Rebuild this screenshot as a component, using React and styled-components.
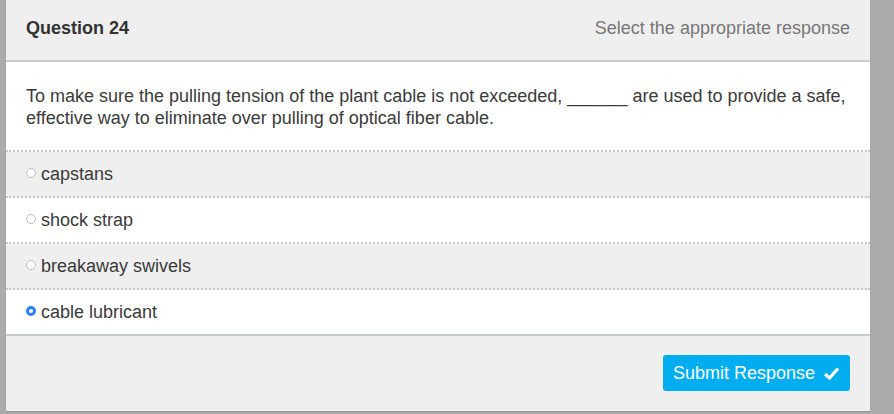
import React from "react";
import styled, { createGlobalStyle } from "styled-components";

const Global = createGlobalStyle`
  html, body { margin: 0; padding: 0; background: #ababab; }
  body { font-family: "Liberation Sans", Arial, sans-serif; }
  * { box-sizing: border-box; }
`;

const Page = styled.div`
  width: 894px;
  height: 414px;
  background: #ababab;
  padding: 0 24px 0 6px;
`;

const Panel = styled.div`
  width: 864px;
  height: 411px;
  background: #efefef;
  display: flex;
  flex-direction: column;
  box-shadow: 0 1px 1px rgba(0,0,0,0.12);
`;

const Header = styled.div`
  height: 62px;
  flex: none;
  display: flex;
  align-items: center;
  justify-content: space-between;
  padding: 0 20px 4px 20px;
  border-bottom: 2px solid #c8cdd1;
  font-size: 18px;
`;

const Title = styled.div`
  font-weight: bold;
  color: #333;
`;

const Hint = styled.div`
  color: #777;
`;

const Question = styled.div`
  background: #fff;
  padding: 23px 20px 21px 20px;
  font-size: 18px;
  line-height: 22px;
  color: #3a3a3a;
  border-bottom: 2px dotted #c9c9c9;
`;

const Options = styled.div`
  display: flex;
  flex-direction: column;
  border-bottom: 2px solid #c8cdd1;
`;

const Option = styled.label`
  display: flex;
  align-items: center;
  padding: 0 20px;
  background: ${(p) => (p.$alt ? "#efefef" : "#fff")};
  border-bottom: ${(p) => (p.$last ? "none" : "2px dotted #c9c9c9")};
  font-size: 18px;
  color: #3a3a3a;
  height: ${(p) => (p.$last ? "44px" : "46px")};
`;

const Radio = styled.span`
  width: 10px;
  height: 10px;
  border-radius: 50%;
  margin-right: 5px;
  margin-top: -3px;
  flex: none;
  ${(p) =>
    p.$checked
      ? `background: #fff; border: 3px solid #2d7ff9;`
      : `background: #fff; border: 1px solid #bdbdbd;`}
`;

const Footer = styled.div`
  flex: 1;
  display: flex;
  align-items: center;
  justify-content: flex-end;
  padding: 0 20px 1px 0;
`;

const Button = styled.button`
  height: 36px;
  padding: 0 10px 0 10px;
  background: #00aeef;
  border: none;
  border-radius: 3px;
  color: #fff;
  font-family: "Liberation Sans", Arial, sans-serif;
  font-size: 18px;
  display: flex;
  align-items: center;
  gap: 8px;
`;

const options = ["capstans", "shock strap", "breakaway swivels", "cable lubricant"];

export default function App() {
  return (
    <>
      <Global />
      <Page>
        <Panel>
          <Header>
            <Title>Question 24</Title>
            <Hint>Select the appropriate response</Hint>
          </Header>
          <Question>
            To make sure the pulling tension of the plant cable is not exceeded, ______ are used to provide a safe, effective way to eliminate over pulling of optical fiber cable.
          </Question>
          <Options>
            {options.map((o, i) => (
              <Option key={o} $alt={i % 2 === 0} $last={i === options.length - 1}>
                <Radio $checked={i === 3} />
                {o}
              </Option>
            ))}
          </Options>
          <Footer>
            <Button>
              Submit Response
              <svg width="17" height="18" viewBox="0 0 17 18">
                <path d="M2 10 L6.5 14 L15 4.5" fill="none" stroke="#fff" strokeWidth="3.2" />
              </svg>
            </Button>
          </Footer>
        </Panel>
      </Page>
    </>
  );
}
